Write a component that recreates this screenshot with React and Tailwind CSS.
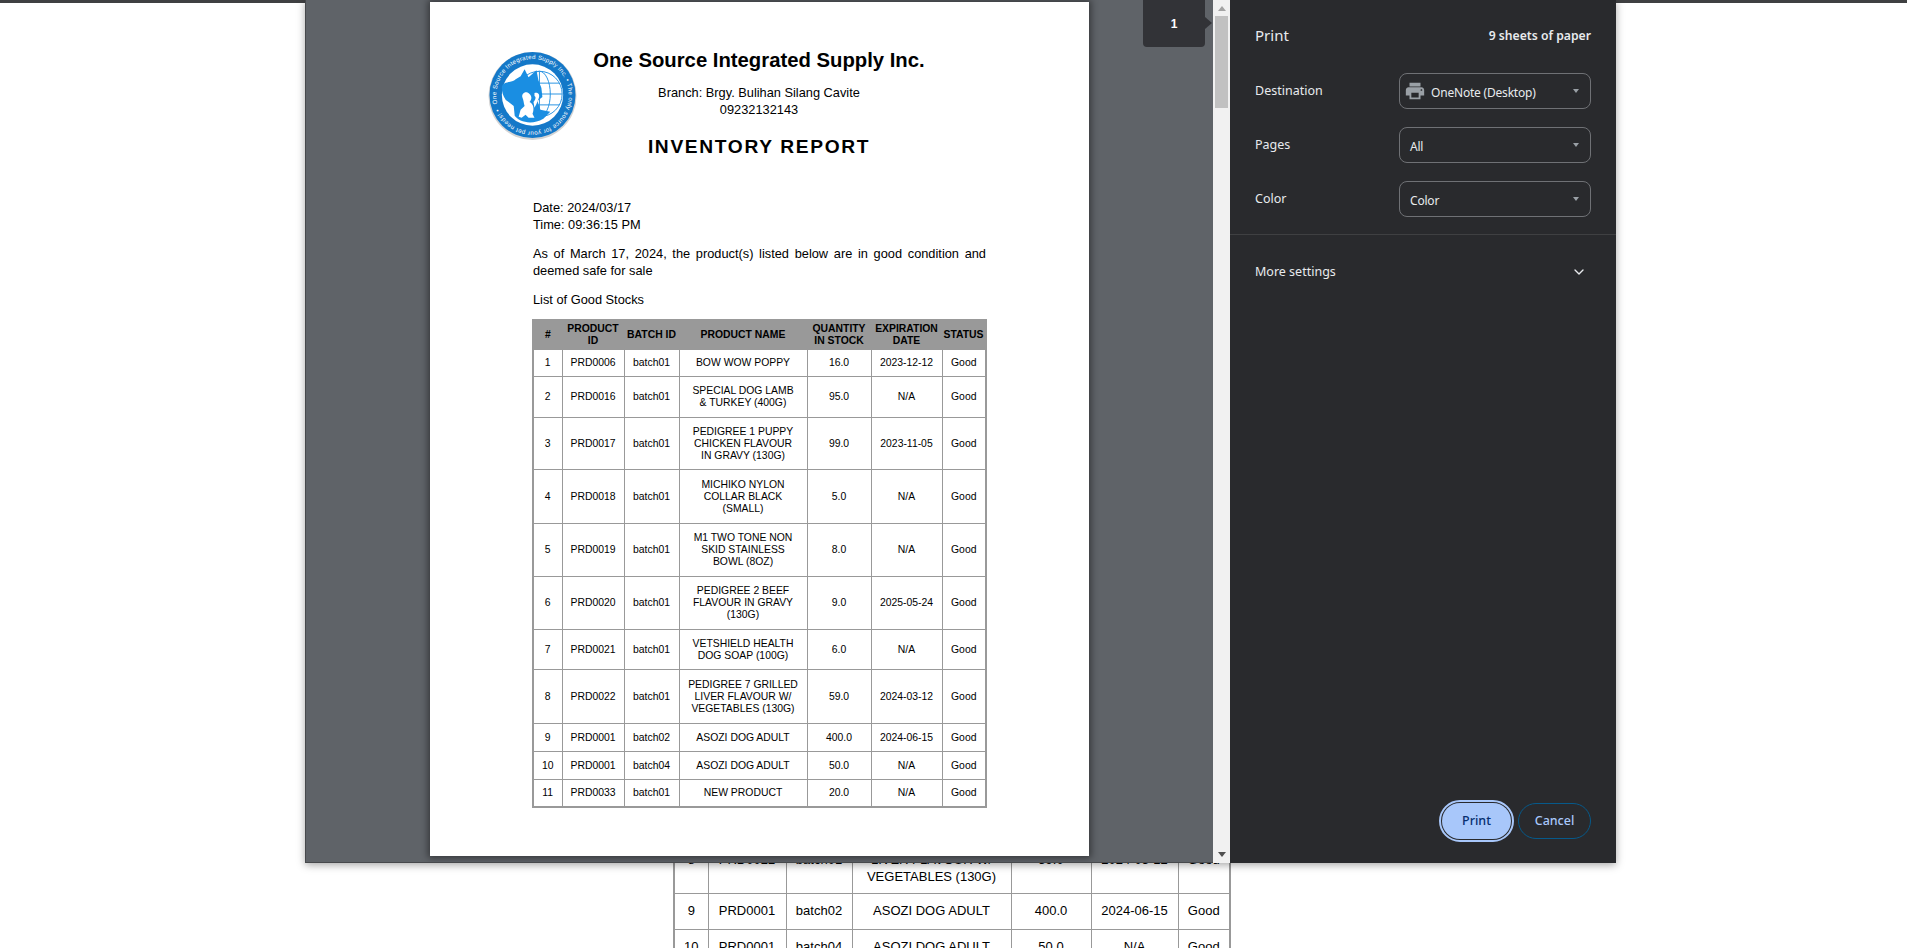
import { ChevronDown } from "lucide-react";

const rows = [
  ["1", "PRD0006", "batch01", "BOW WOW POPPY", "16.0", "2023-12-12", 27],
  ["2", "PRD0016", "batch01", "SPECIAL DOG LAMB\n& TURKEY (400G)", "95.0", "N/A", 41],
  ["3", "PRD0017", "batch01", "PEDIGREE 1 PUPPY\nCHICKEN FLAVOUR\nIN GRAVY (130G)", "99.0", "2023-11-05", 52],
  ["4", "PRD0018", "batch01", "MICHIKO NYLON\nCOLLAR BLACK\n(SMALL)", "5.0", "N/A", 54],
  ["5", "PRD0019", "batch01", "M1 TWO TONE NON\nSKID STAINLESS\nBOWL (8OZ)", "8.0", "N/A", 53],
  ["6", "PRD0020", "batch01", "PEDIGREE 2 BEEF\nFLAVOUR IN GRAVY\n(130G)", "9.0", "2025-05-24", 53],
  ["7", "PRD0021", "batch01", "VETSHIELD HEALTH\nDOG SOAP (100G)", "6.0", "N/A", 40],
  ["8", "PRD0022", "batch01", "PEDIGREE 7 GRILLED\nLIVER FLAVOUR W/\nVEGETABLES (130G)", "59.0", "2024-03-12", 54],
  ["9", "PRD0001", "batch02", "ASOZI DOG ADULT", "400.0", "2024-06-15", 28],
  ["10", "PRD0001", "batch04", "ASOZI DOG ADULT", "50.0", "N/A", 28],
  ["11", "PRD0033", "batch01", "NEW PRODUCT", "20.0", "N/A", 28],
];

const pageRows = [
  ["8", "PRD0022", "batch01", "PEDIGREE 7 GRILLED\nLIVER FLAVOUR W/\nVEGETABLES (130G)", "59.0", "2024-03-12", 66],
  ["9", "PRD0001", "batch02", "ASOZI DOG ADULT", "400.0", "2024-06-15", 36],
  ["10", "PRD0001", "batch04", "ASOZI DOG ADULT", "50.0", "N/A", 36],
];

function Logo() {
  return (
    <svg viewBox="0 0 90 90" className="w-[89px] h-[90px] mt-[2px] shrink-0">
      <defs>
        <path id="logoRing" d="M 9.5 54 A 36.6 36.6 0 1 1 9.6 54.4" />
      </defs>
      <circle cx="45" cy="46" r="44.5" fill="#d4d4d4" />
      <circle cx="45" cy="45" r="43.5" fill="#1478c8" />
      <circle cx="45" cy="45" r="31" fill="#fff" />
      <text fill="#fff" fontSize="6.2" fontFamily="'Liberation Sans', sans-serif">
        <textPath href="#logoRing" textLength="224" lengthAdjust="spacing">
          One Source Integrated Supply Inc. • The only source for your pet needs! •
        </textPath>
      </text>
      <g fill="none" stroke="#2b95e3" strokeWidth="1">
        <circle cx="52" cy="44" r="23" />
        <ellipse cx="52" cy="44" rx="11" ry="23" />
        <path d="M32 33h40M30 44h45M32 55h40M52 21v46" />
      </g>
      <path
        d="M14 37C15 31 24 33 28 29L33 26 37 19 41 27 49 20 51 30 54 38 55 47 50 51 53 60 63 62 56 69C44 76 31 72 27 66L26 56 18 50C15 46 14 42 14 37Z"
        fill="#1a8ee2"
      />
      <path
        d="M35 48C33 43 39 40 42 44 45 47 44 50 42 52 46 54 47 59 45 64L47 68 41 68 38 65 34 68 31 67 33 60 37 56C36 53 36 50 35 48Z"
        fill="#fff"
      />
      <path d="M47 43C51 42 53 45 51 49L49 54 47 58 46 52C48 50 49 47 47 46Z" fill="#fff" />
    </svg>
  );
}

function StockTable({ data, colClass, lineClass, header, cellClass }) {
  return (
    <table className={`table-fixed border-collapse border-2 border-[#999] text-center text-black ${lineClass}`}>
      <colgroup>
        {colClass.map((c, i) => (
          <col key={i} className={c} />
        ))}
      </colgroup>
      {header && (
        <thead>
          <tr className="h-[29px] bg-[#999] font-bold">
            <th>#</th>
            <th>
              PRODUCT
              <br />
              ID
            </th>
            <th>BATCH ID</th>
            <th>PRODUCT NAME</th>
            <th>
              QUANTITY
              <br />
              IN STOCK
            </th>
            <th>
              EXPIRATION
              <br />
              DATE
            </th>
            <th>STATUS</th>
          </tr>
        </thead>
      )}
      <tbody>
        {data.map((r) => (
          <tr key={r[0]} style={{ height: r[6] }}>
            {r.slice(0, 5).map((v, i) => (
              <td key={i} className={`border border-[#999] whitespace-pre-line ${cellClass}`}>
                {v}
              </td>
            ))}
            <td className={`border border-[#999] ${cellClass}`}>{r[5]}</td>
            <td className={`border border-[#999] ${cellClass}`}>Good</td>
          </tr>
        ))}
      </tbody>
    </table>
  );
}

function Paper() {
  return (
    <div className="w-[659px] h-[854px] mt-[2px] ml-[124px] bg-white shadow-[0_0_7px_2px_rgba(0,0,0,0.45)] text-black font-['Liberation_Sans',Arial,sans-serif] shrink-0">
      <div className="flex pl-[58px] pt-[46px]">
        <Logo />
        <div className="w-[364px] text-center">
          <div className="text-[20.3px] leading-[24px] font-bold whitespace-nowrap">One Source Integrated Supply Inc.</div>
          <div className="mt-[12px] text-[12.8px] leading-[17px]">
            Branch: Brgy. Bulihan Silang Cavite
            <br />
            09232132143
          </div>
          <div className="mt-[17px] text-[19.2px] leading-[24px] font-bold tracking-[1.65px] whitespace-nowrap">INVENTORY REPORT</div>
        </div>
      </div>
      <div className="ml-[103px] w-[453px] mt-[40px] text-[12.8px] leading-[17px]">
        <div>
          Date: 2024/03/17
          <br />
          Time: 09:36:15 PM
        </div>
        <p className="mt-[12px] text-justify">
          As of March 17, 2024, the product(s) listed below are in good condition and deemed safe for sale
        </p>
        <p className="mt-[12px]">List of Good Stocks</p>
      </div>
      <div className="ml-[102px] mt-[11px]">
        <StockTable
          data={rows}
          header
          cellClass="p-0 pt-[1px]"
          lineClass="text-[10.4px] leading-[12px]"
          colClass={["w-[29px]", "w-[62px]", "w-[55px]", "w-[128px]", "w-[64px]", "w-[71px]", "w-[44px]"]}
        />
      </div>
    </div>
  );
}

function Scrollbar() {
  return (
    <div className="w-[17px] shrink-0 bg-[#f1f1f1] flex flex-col items-center">
      <div className="h-[16px] flex items-center justify-center">
        <div className="w-0 h-0 border-x-[4px] border-x-transparent border-b-[5px] border-b-[#a3a3a3]" />
      </div>
      <div className="w-[13px] h-[92px] bg-[#c1c1c1]" />
      <div className="mt-auto h-[18px] flex items-center justify-center">
        <div className="w-0 h-0 border-x-[4px] border-x-transparent border-t-[5px] border-t-[#505050]" />
      </div>
    </div>
  );
}

function Select({ label, value, icon }) {
  return (
    <div className="flex items-center h-[36px] mb-[18px]">
      <div className="w-[144px] pt-[1px]">{label}</div>
      <div className="relative flex items-center w-[192px] h-[36px] rounded-[8px] border border-[#6f7175]">
        {icon ? (
          <svg viewBox="0 0 24 24" fill="#9aa0a6" className="w-[22px] h-[22px] ml-[4px]">
            <path d="M19 8H5c-1.66 0-3 1.34-3 3v6h4v4h12v-4h4v-6c0-1.66-1.34-3-3-3zm-3 11H8v-5h8v5zm3-7c-.55 0-1-.45-1-1s.45-1 1-1 1 .45 1 1-.45 1-1 1zm-1-9H6v4h12V3z" />
          </svg>
        ) : null}
        <span className={`pt-[4px] text-[12px] tracking-[-0.2px] ${icon ? "ml-[5px]" : "ml-[10px]"}`}>{value}</span>
        <div className="absolute right-[11px] top-[15px] w-0 h-0 border-x-[3.5px] border-x-transparent border-t-[4px] border-t-[#9aa0a6]" />
      </div>
    </div>
  );
}

function SidePanel() {
  return (
    <div className="w-[386px] shrink-0 bg-[#292a2d] text-[#e8eaed] text-[12.5px] font-['Noto_Sans',sans-serif] flex flex-col">
      <div className="flex items-center justify-between h-[72px] pl-[25px] pr-[25px]">
        <span className="text-[15px] pb-[2px]">Print</span>
        <span className="font-semibold text-[12.2px]">9 sheets of paper</span>
      </div>
      <div className="h-[162px] pl-[25px] pr-[25px] pt-[1px]">
        <Select label="Destination" value="OneNote (Desktop)" icon />
        <Select label="Pages" value="All" />
        <Select label="Color" value="Color" />
      </div>
      <div className="h-px bg-[#3f4042]" />
      <div className="flex items-center justify-between h-[74px] pl-[25px] pr-[29px]">
        <span>More settings</span>
        <ChevronDown size={16} strokeWidth={2} className="text-[#e8eaed]" />
      </div>
      <div className="mt-auto flex justify-end items-center gap-[7px] pr-[25px] pb-[24px] font-medium">
        <button className="w-[69px] h-[36px] rounded-full bg-[#a8c7fa] text-[#062e6f] outline-2 outline-offset-[1.5px] outline-[#a8c7fa]">
          Print
        </button>
        <button className="w-[73px] h-[36px] rounded-full border border-[#06598a] text-[#a8c7fa]">Cancel</button>
      </div>
    </div>
  );
}

export default function App() {
  return (
    <div className="relative h-screen overflow-hidden bg-white">
      <div className="h-[3px] bg-[#3f4042]" />
      <div className="ml-[673px] mt-[823px] font-['Liberation_Sans',Arial,sans-serif]">
        <StockTable
          data={pageRows}
          cellClass="p-0"
          lineClass="text-[13px] leading-[16.5px]"
          colClass={["w-[34px]", "w-[78px]", "w-[66px]", "w-[159px]", "w-[80px]", "w-[87px]", "w-[52px]"]}
        />
      </div>

      {/* print dialog sits over the page */}
      <div className="absolute left-[305px] top-0 w-[1311px] h-[863px] flex shadow-[0_2px_8px_rgba(0,0,0,0.35)]">
        <div className="relative flex-1 flex overflow-hidden bg-[#5f6368] border-l border-b border-[#47494c]">
          <Paper />
          <div className="absolute left-[837px] top-0 w-[62px] h-[47px] rounded-b-[4px] bg-[#323337] flex items-center justify-center text-white text-[12px] font-bold font-['Liberation_Sans',sans-serif]">
            1
            <div className="absolute left-[62px] top-[17px] w-0 h-0 border-y-[6px] border-y-transparent border-l-[7px] border-l-[#323337]" />
          </div>
        </div>
        <Scrollbar />
        <SidePanel />
      </div>
    </div>
  );
}
